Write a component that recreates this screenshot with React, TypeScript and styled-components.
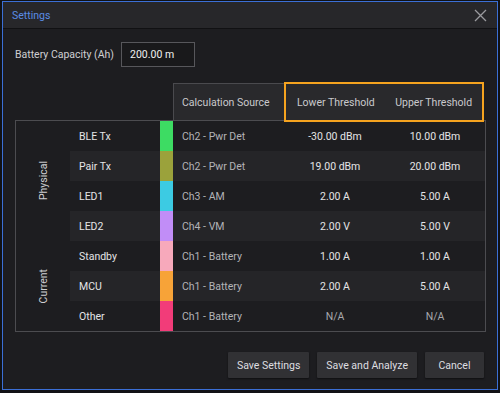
import React from 'react';
import styled, { createGlobalStyle } from 'styled-components';

const GlobalStyle = createGlobalStyle`
	html, body {
		margin: 0;
		padding: 0;
		background: #111215;
		font-family: Roboto, 'Liberation Sans', sans-serif;
		overflow: hidden;
	}
`;

type Row = {
	name: string;
	color: string;
	source: string;
	lower: string;
	upper: string;
};

const groups: { label: string; rows: Row[] }[] = [
	{
		label: 'Physical',
		rows: [
			{ name: 'BLE Tx', color: '#3ddc63', source: 'Ch2 - Pwr Det', lower: '-30.00 dBm', upper: '10.00 dBm' },
			{ name: 'Pair Tx', color: '#9ba23b', source: 'Ch2 - Pwr Det', lower: '19.00 dBm', upper: '20.00 dBm' },
			{ name: 'LED1', color: '#3ccbe3', source: 'Ch3 - AM', lower: '2.00 A', upper: '5.00 A' },
			{ name: 'LED2', color: '#c18df7', source: 'Ch4 - VM', lower: '2.00 V', upper: '5.00 V' },
		],
	},
	{
		label: 'Current',
		rows: [
			{ name: 'Standby', color: '#f7a9bb', source: 'Ch1 - Battery', lower: '1.00 A', upper: '1.00 A' },
			{ name: 'MCU', color: '#f7a338', source: 'Ch1 - Battery', lower: '2.00 A', upper: '5.00 A' },
			{ name: 'Other', color: '#f23c79', source: 'Ch1 - Battery', lower: 'N/A', upper: 'N/A' },
		],
	},
];

const App = (): JSX.Element => {
	let index = 0;

	return (
		<>
			<GlobalStyle />
			<Dialog>
				<TitleBar>
					<Title>Settings</Title>
					<CloseButton aria-label='Close'>
						<svg width='13' height='13' viewBox='0 0 13 13'>
							<path d='M1 1 L12 12 M12 1 L1 12' stroke='#9a9a9e' strokeWidth='1.3' fill='none' />
						</svg>
					</CloseButton>
				</TitleBar>
				<Content>
					<CapacityRow>
						<FieldLabel>Battery Capacity (Ah)</FieldLabel>
						<Field defaultValue='200.00 m' />
					</CapacityRow>

					<HeaderRow>
						<HeaderCell>Calculation Source</HeaderCell>
						<ThresholdHeader>
							<HeaderValue>Lower Threshold</HeaderValue>
							<HeaderValue>Upper Threshold</HeaderValue>
						</ThresholdHeader>
					</HeaderRow>

					<TableBody>
						{groups.map((group) => (
							<Group key={group.label}>
								<GroupLabel>
									<span>{group.label}</span>
								</GroupLabel>
								<div>
									{group.rows.map((row) => {
										const shaded = index++ % 2 === 1;
										return (
											<TableRow key={row.name} $shaded={shaded}>
												<NameCell>{row.name}</NameCell>
												<Swatch $color={row.color} />
												<SourceCell>{row.source}</SourceCell>
												<ValueCell $muted={row.lower === 'N/A'}>{row.lower}</ValueCell>
												<ValueCell $muted={row.upper === 'N/A'}>{row.upper}</ValueCell>
											</TableRow>
										);
									})}
								</div>
							</Group>
						))}
					</TableBody>

					<Actions>
						<Button>Save Settings</Button>
						<Button>Save and Analyze</Button>
						<Button>Cancel</Button>
					</Actions>
				</Content>
			</Dialog>
		</>
	);
};

const Dialog = styled.div`
	box-sizing: border-box;
	width: 496px;
	height: 389px;
	margin: 1px 0 0 2px;
	border: 1px solid #3b6fd6;
	background: #1d1d20;
	display: flex;
	flex-direction: column;
`;

const TitleBar = styled.div`
	height: 26px;
	background: #27272a;
	border-bottom: 1px solid #111113;
	display: flex;
	align-items: center;
	justify-content: space-between;
	padding: 0 9px 0 9px;
`;

const Title = styled.span`
	color: #5a8ce4;
	font-size: 10.5px;
`;

const CloseButton = styled.button`
	background: none;
	border: none;
	padding: 0;
	width: 13px;
	height: 13px;
	display: flex;
	margin-right: 1px;
`;

const Content = styled.div`
	flex: 1;
	padding: 13px 13px 11px 12px;
	display: flex;
	flex-direction: column;
`;

const CapacityRow = styled.div`
	display: flex;
	align-items: center;
	gap: 7px;
`;

const FieldLabel = styled.label`
	color: #cfcfd2;
	font-size: 10.5px;
`;

const Field = styled.input`
	box-sizing: border-box;
	width: 74px;
	height: 25px;
	background: #19191b;
	border: 1px solid #57575b;
	color: #f0f0f0;
	font-family: inherit;
	font-size: 10.5px;
	padding: 0 8px;
	outline: none;
`;

const HeaderRow = styled.div`
	display: flex;
	margin: 15px 0 0 158px;
	height: 38px;
	position: relative;
	z-index: 1;
`;

const HeaderCell = styled.div`
	box-sizing: border-box;
	width: 112px;
	height: 37px;
	margin-top: 1px;
	background: #29292c;
	border-top: 1px solid #4a4a4e;
	border-left: 1px solid #4a4a4e;
	color: #c9c9cc;
	font-size: 10.5px;
	display: flex;
	align-items: center;
	padding-left: 8px;
`;

const ThresholdHeader = styled.div`
	box-sizing: border-box;
	width: 201px;
	height: 40px;
	background: #29292c;
	border: 2px solid #f5a31f;
	display: grid;
	grid-template-columns: 99px 1fr;
	align-items: center;
`;

const HeaderValue = styled.span`
	color: #c9c9cc;
	font-size: 10.5px;
	text-align: center;
`;

const TableBody = styled.div`
	box-sizing: border-box;
	width: 471px;
	border: 1px solid #4c4c50;
`;

const Group = styled.div`
	display: grid;
	grid-template-columns: 54px 1fr;
`;

const GroupLabel = styled.div`
	display: flex;
	align-items: center;
	justify-content: center;

	span {
		color: #cfcfd2;
		font-size: 10.5px;
		writing-mode: vertical-rl;
		transform: rotate(180deg);
	}
`;

const TableRow = styled.div<{ $shaded: boolean }>`
	display: grid;
	grid-template-columns: 90px 13px 112px 100px 100px;
	height: 30px;
	align-items: center;
	background: ${(p) => (p.$shaded ? '#252528' : '#1d1d20')};
	font-size: 10.5px;
`;

const NameCell = styled.span`
	color: #e4e4e6;
	padding-left: 9px;
`;

const Swatch = styled.span<{ $color: string }>`
	align-self: stretch;
	background: ${(p) => p.$color};
`;

const SourceCell = styled.span`
	color: #b3b3b7;
	padding-left: 9px;
`;

const ValueCell = styled.span<{ $muted: boolean }>`
	color: ${(p) => (p.$muted ? '#a8a8ac' : '#e4e4e6')};
	text-align: center;
`;

const Actions = styled.div`
	margin-top: auto;
	display: flex;
	justify-content: flex-end;
	gap: 8px;
`;

const Button = styled.button`
	height: 26px;
	min-width: 59px;
	padding: 0 9px;
	background: #313134;
	border: none;
	border-radius: 1px;
	box-shadow: 0 1px 2px rgba(0, 0, 0, 0.5);
	color: #dedee0;
	font-family: inherit;
	font-size: 10.5px;
`;

export default App;
